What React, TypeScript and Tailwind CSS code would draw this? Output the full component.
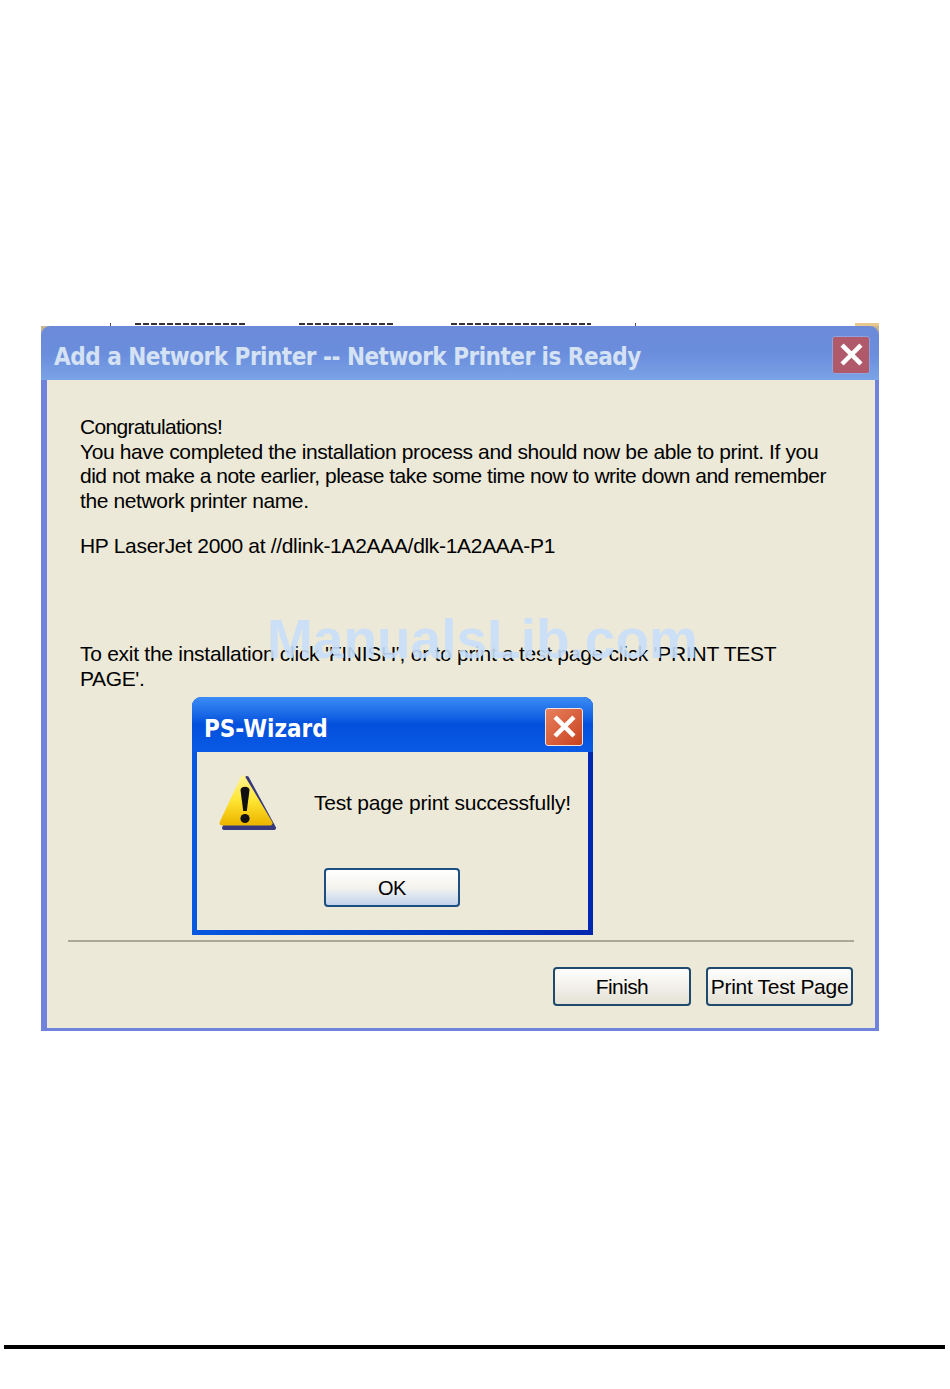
const sans = "font-['Liberation_Sans',Arial,sans-serif]";

function CloseButton({ className }: { className: string }) {
  return (
    <div className={`flex items-center justify-center rounded-[3px] border ${className}`}>
      <svg viewBox="0 0 24 24" className="w-[27px] h-[27px]" fill="none" stroke="#ffffff" strokeWidth="4" strokeLinecap="square">
        <path d="M5 5 L19 19 M19 5 L5 19" />
      </svg>
    </div>
  );
}

function WarningIcon() {
  return (
    <svg viewBox="0 0 60 60" className="w-[60px] h-[60px]">
      <defs>
        <linearGradient id="warn" x1="0" y1="0" x2="0" y2="1">
          <stop offset="0" stopColor="#fff38a" />
          <stop offset="0.5" stopColor="#fee533" />
          <stop offset="1" stopColor="#eeb800" />
        </linearGradient>
      </defs>
      <path d="M29 5 L56 55 L6 55 Z" fill="#38387c" stroke="#38387c" strokeWidth="4" strokeLinejoin="round" />
      <path d="M25 5 L52 50 L4 50 Z" fill="url(#warn)" stroke="url(#warn)" strokeWidth="5" strokeLinejoin="round" />
      <path d="M22.5 17 C22.5 12.5 31.5 12.5 31.5 17 L28.8 38 L25.2 38 Z" fill="#111111" />
      <circle cx="27" cy="45.5" r="4.6" fill="#111111" />
    </svg>
  );
}

function WizardDialog() {
  return (
    <div className="absolute left-[151px] top-[374px] w-[401px] h-[238px] flex flex-col rounded-t-[9px] bg-gradient-to-r from-[#0858e0] to-[#0026b0] overflow-hidden">
      <div className="h-[55px] shrink-0 flex items-center justify-between pl-[12px] pr-[10px] bg-gradient-to-b from-[#3b8cf5] via-[#0450dc] to-[#0a5ae6]">
        <span className="mt-[8px] text-[24px] font-bold text-white font-['DejaVu_Sans_Condensed','Liberation_Sans',sans-serif]">PS-Wizard</span>
        <CloseButton className="mt-[4px] w-[38px] h-[38px] border-[#f0e4e0] bg-gradient-to-br from-[#e8805c] to-[#c8401c]" />
      </div>
      <div className="flex-1 mx-[5px] mb-[5px] bg-[#ece9d8] flex flex-col">
        <div className="flex items-start pl-[21px] pt-[21px]">
          <WarningIcon />
          <span className="ml-[36px] mt-[14px] text-[21px] text-black tracking-[-0.2px] whitespace-nowrap">Test page print successfully!</span>
        </div>
        <div className="pl-[127px] pt-[35px]">
          <button className="block w-[136px] h-[39px] rounded-[4px] border-2 border-[#1c4f80] bg-gradient-to-b from-white via-[#f4f3ee] to-[#c3d4ee] text-[20px] tracking-[-0.5px] text-black">
            OK
          </button>
        </div>
      </div>
    </div>
  );
}

export default function App() {
  return (
    <div className={`w-[950px] h-[1389px] bg-white flex flex-col ${sans}`}>
      <div className="relative ml-[41px] mt-[323px] w-[838px] h-[708px] flex flex-col bg-[#6f83dc] shrink-0">
        {/* cut off scan of the page behind the window */}
        <div className="h-[3px] shrink-0 bg-white flex items-start">
          <div className="ml-[69px] w-px h-[3px] bg-[#555555]" />
          <div className="ml-[24px] w-[112px] h-[2px] bg-[repeating-linear-gradient(90deg,#333333_0_6px,transparent_6px_8px)]" />
          <div className="ml-[52px] w-[96px] h-[2px] bg-[repeating-linear-gradient(90deg,#333333_0_6px,transparent_6px_8px)]" />
          <div className="ml-[56px] w-[140px] h-[2px] bg-[repeating-linear-gradient(90deg,#333333_0_6px,transparent_6px_8px)]" />
          <div className="ml-[44px] w-px h-[3px] bg-[#555555]" />
          <div className="ml-auto w-[24px] h-[3px] bg-[#e8c88c]" />
        </div>
        <div className="h-[54px] shrink-0 bg-[#c9b88f]">
          <div className="h-full flex items-center justify-between pl-[13px] pr-[9px] rounded-t-[9px] bg-gradient-to-b from-[#6c8ad8] via-[#6a8ddc] to-[#7ba3e6]">
            <span className="mt-[8px] text-[24px] font-bold tracking-[-0.5px] text-[#d5e2f4] whitespace-nowrap font-['DejaVu_Sans_Condensed','Liberation_Sans',sans-serif]">
              Add a Network Printer -- Network Printer is Ready
            </span>
            <CloseButton className="mt-[3px] w-[38px] h-[38px] border-[#8fa3dd] bg-[#b0596a]" />
          </div>
        </div>
        <div className="flex-1 ml-[6px] mr-[4px] mb-[3px] bg-[#ece9d8] flex flex-col">
          <div className="pl-[33px] pt-[35px] text-[21px] leading-[24.6px] tracking-[-0.38px] text-black whitespace-nowrap">
            <p className="tracking-[-0.68px]">Congratulations!</p>
            <p>You have completed the installation process and should now be able to print. If you</p>
            <p className="tracking-[-0.49px]">did not make a note earlier, please take some time now to write down and remember</p>
            <p>the network printer name.</p>
            <p className="mt-[21px] tracking-[-0.31px]">HP LaserJet 2000 at //dlink-1A2AAA/dlk-1A2AAA-P1</p>
            <p className="mt-[83px] tracking-[-0.27px]">To exit the installation click 'FINISH', or to print a test page click 'PRINT TEST</p>
            <p>PAGE'.</p>
          </div>
          <div className="mt-auto mx-[21px] h-[2px] bg-[#aca899]" />
          <div className="flex justify-end gap-[15px] pr-[22px] pt-[25px] pb-[22px]">
            <button className="w-[138px] h-[39px] rounded-[4px] border-2 border-[#1f4a6e] bg-gradient-to-b from-white to-[#e4e1d4] text-[21px] tracking-[-0.6px] text-black">
              Finish
            </button>
            <button className="w-[147px] h-[39px] rounded-[4px] border-2 border-[#1f4a6e] bg-gradient-to-b from-white to-[#e4e1d4] text-[21px] tracking-[-0.3px] text-black whitespace-nowrap">
              Print Test Page
            </button>
          </div>
        </div>
        <span className="absolute left-[226px] top-[286px] text-[55px] leading-[60px] font-bold text-[#c8dffa]/90 whitespace-nowrap">
          ManualsLib.com
        </span>
        <WizardDialog />
      </div>
      <div className="ml-[4px] mt-[314px] w-[941px] h-[4px] bg-black shrink-0" />
    </div>
  );
}
